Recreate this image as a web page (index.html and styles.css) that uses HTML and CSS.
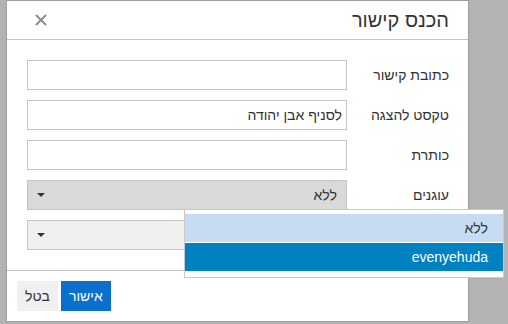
FILE: index.html
```html
<!DOCTYPE html>
<html lang="he">
<head>
    <meta charset="UTF-8">
    <meta name="viewport" content="width=device-width, initial-scale=1.0">
    <title>הכנס קישור</title>
    <link rel="stylesheet" href="styles.css">
</head>
<body>

<div class="dialog">
    <div class="dialog-head">
        <span class="dialog-title">הכנס קישור</span>
        <button type="button" class="close" aria-label="סגור">
            <svg width="12" height="12" viewBox="0 0 12 12">
                <path d="M1 1 L11 11 M11 1 L1 11" stroke="#8c8c8c" stroke-width="2" fill="none"/>
            </svg>
        </button>
    </div>

    <div class="dialog-body">
        <label for="href">כתובת קישור</label>
        <input type="text" id="href" class="textbox">

        <label for="text">טקסט להצגה</label>
        <input type="text" id="text" class="textbox" value="לסניף אבן יהודה">

        <label for="title">כותרת</label>
        <input type="text" id="title" class="textbox">

        <label>עוגנים</label>
        <div class="listbox active">
            <span>ללא</span>
            <i class="caret"></i>
            <ul class="menu">
                <li class="menu-item hover">ללא</li>
                <li class="menu-item selected">evenyehuda</li>
            </ul>
        </div>

        <label>יעד</label>
        <div class="listbox">
            <span></span>
            <i class="caret"></i>
        </div>
    </div>

    <div class="dialog-foot">
        <button type="button" class="btn btn-primary">אישור</button>
        <button type="button" class="btn">בטל</button>
    </div>
</div>

</body>
</html>
```

FILE: styles.css
```css
* {
    box-sizing: border-box;
}
body {
    margin: 0;
    background-color: #b3b3b3;
    font-family: "Liberation Sans", Arial, sans-serif;
    font-size: 14px;
    color: #333;
}
.dialog {
    width: 463px;
    margin-left: 6px;
    background-color: #fff;
    border: 1px solid #9e9e9e;
    direction: rtl;
}
.dialog-head {
    height: 39px;
    border-bottom: 1px solid #c5c5c5;
    display: flex;
    align-items: center;
    justify-content: space-between;
    padding: 0 19px 0 28px;
}
.dialog-title {
    font-size: 20px;
}
.close {
    border: 0;
    padding: 0;
    background: none;
    width: 12px;
    height: 12px;
    display: flex;
}
.dialog-body {
    display: grid;
    grid-template-columns: 1fr 320px;
    grid-auto-rows: 30px;
    row-gap: 10px;
    padding: 20px 19px 20px 20px;
}
.dialog-body label {
    align-self: center;
}
.textbox {
    height: 30px;
    border: 1px solid #c5c5c5;
    border-radius: 0;
    padding: 0 4px;
    font-family: inherit;
    font-size: 14px;
    color: #333;
    background-color: #fff;
    outline: none;
}
.listbox {
    position: relative;
    height: 30px;
    border: 1px solid #c5c5c5;
    background-color: #f0f0f0;
    display: flex;
    align-items: center;
    padding: 0 9px;
}
.listbox.active {
    background-color: #d9d9d9;
}
.caret {
    position: absolute;
    left: 9px;
    top: 50%;
    margin-top: -2px;
    border-left: 4px solid transparent;
    border-right: 4px solid transparent;
    border-top: 4px solid #333;
}
.menu {
    position: absolute;
    top: 28px;
    left: 156px;
    width: 320px;
    margin: 0;
    padding: 4px 0 6px;
    list-style: none;
    background-color: #fff;
    border: 1px solid #c8c8c8;
    z-index: 10;
}
.menu-item {
    height: 28px;
    line-height: 28px;
    padding: 0 15px;
}
.menu-item + .menu-item {
    margin-top: 1px;
}
.menu-item.hover {
    background-color: #c6dcf3;
}
.menu-item.selected {
    background-color: #0081c2;
    color: #fff;
}
.dialog-foot {
    border-top: 1px solid #c5c5c5;
    padding: 10px;
    display: flex;
    justify-content: flex-end;
    gap: 3px;
}
.btn {
    height: 30px;
    border: 0;
    padding: 0 8px;
    font-family: inherit;
    font-size: 14px;
    color: #333;
    background-color: #f0f0f0;
}
.btn-primary {
    background-color: #0a6fcd;
    color: #fff;
}
```
